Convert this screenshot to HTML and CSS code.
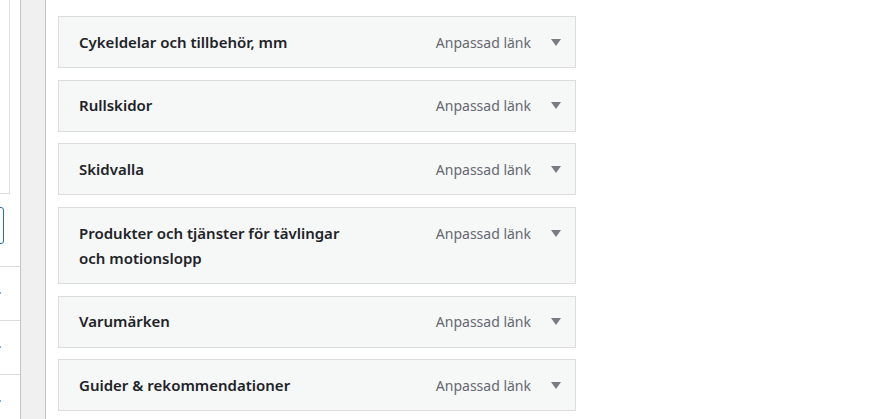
FILE: index.html
```html
<!DOCTYPE html>
<html lang="sv">
<head>
<meta charset="utf-8">
<link rel="stylesheet" href="styles.css">
</head>
<body>
<div class="page">
  <aside class="side">
    <div class="side-box"></div>
    <div class="side-btn"></div>
    <div class="side-row"><span class="dot"></span></div>
    <div class="side-row"><span class="dot"></span></div>
    <div class="side-row"><span class="dot"></span></div>
  </aside>
  <div class="gutter"></div>
  <main class="main">
    <ul class="menu">
      <li class="item"><span class="title">Cykeldelar och tillbehör, mm</span><span class="controls"><span class="type">Anpassad länk</span><span class="arrow"></span></span></li>
      <li class="item"><span class="title">Rullskidor</span><span class="controls"><span class="type">Anpassad länk</span><span class="arrow"></span></span></li>
      <li class="item"><span class="title">Skidvalla</span><span class="controls"><span class="type">Anpassad länk</span><span class="arrow"></span></span></li>
      <li class="item"><span class="title">Produkter och tjänster för tävlingar och motionslopp</span><span class="controls"><span class="type">Anpassad länk</span><span class="arrow"></span></span></li>
      <li class="item"><span class="title">Varumärken</span><span class="controls"><span class="type">Anpassad länk</span><span class="arrow"></span></span></li>
      <li class="item"><span class="title">Guider &amp; rekommendationer</span><span class="controls"><span class="type">Anpassad länk</span><span class="arrow"></span></span></li>
    </ul>
  </main>
</div>
</body>
</html>
```
FILE: styles.css
```css
html, body {
  margin: 0;
  padding: 0;
  background: #fff;
  overflow: hidden;
}
.page {
  display: flex;
  height: 419px;
  font-family: "Noto Sans", "Open Sans", sans-serif;
}
.side {
  width: 20px;
  flex: none;
  background: #fff;
  border-right: 1px solid #c3c4c7;
  overflow: hidden;
}
.side-box {
  width: 20px;
  height: 193px;
  margin-left: -12px;
  margin-top: -1px;
  border: 1px solid #dcdcde;
  background: #fff;
}
.side-btn {
  width: 20px;
  height: 35px;
  margin-top: 13px;
  margin-left: -18px;
  border: 1px solid #2271b1;
  border-radius: 3px;
}
.side-row {
  height: 53px;
  border-top: 1px solid #dcdcde;
  position: relative;
}
.side-btn + .side-row { margin-top: 22px; }
.dot {
  position: absolute;
  left: 0;
  top: 25px;
  width: 1px;
  height: 2px;
  background: #72aee6;
}
.gutter {
  width: 24px;
  flex: none;
  background: #f0f0f1;
  border-right: 1px solid #c3c4c7;
}
.main {
  flex: 1;
  padding: 16px 0 0 12px;
}
.menu {
  list-style: none;
  margin: 0;
  padding: 0;
  width: 518px;
}
.item {
  display: flex;
  align-items: flex-start;
  justify-content: space-between;
  box-sizing: border-box;
  margin-bottom: 11.7px;
  padding: 12.5px 14px 12.5px 20px;
  background: #f6f7f7;
  border: 1px solid #dcdcde;
  line-height: 25px;
}
.title {
  font-size: 15px;
  font-weight: 600;
  color: #1d2327;
  max-width: 280px;
}
.controls {
  display: flex;
  align-items: center;
  height: 25px;
}
.type {
  font-size: 14px;
  color: #646970;
}
.arrow {
  width: 0;
  height: 0;
  margin-left: 20px;
  border-left: 5.5px solid transparent;
  border-right: 5.5px solid transparent;
  border-top: 7px solid #787c82;
}
```
